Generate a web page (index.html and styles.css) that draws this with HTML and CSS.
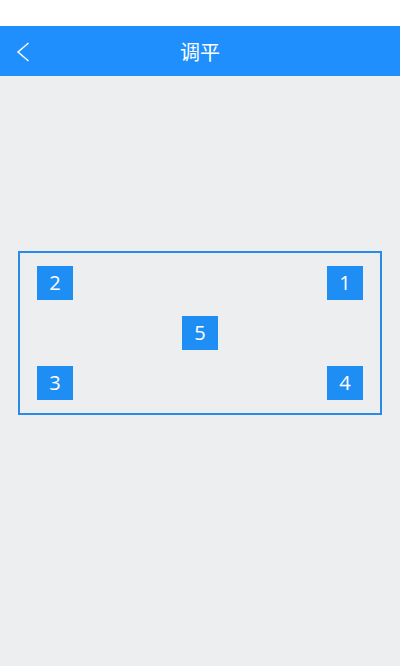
FILE: index.html
```html
<!DOCTYPE html>
<html lang="zh">
<head>
<meta charset="utf-8">
<link rel="stylesheet" href="styles.css">
</head>
<body>
<div class="status"></div>
<header class="bar">
  <svg class="back" width="14" height="20" viewBox="0 0 14 20"><path d="M12.5 1 L2 10 L12.5 19" fill="none" stroke="#fff" stroke-width="1.5"/></svg>
  <div class="title">调平</div>
</header>
<main class="page">
  <div class="box">
    <div class="row"><div class="sq">2</div><div class="sq">1</div></div>
    <div class="row center"><div class="sq">5</div></div>
    <div class="row"><div class="sq">3</div><div class="sq">4</div></div>
  </div>
</main>
</body>
</html>
```
FILE: styles.css
```css
html, body { margin: 0; padding: 0; }
body { width: 400px; height: 666px; background: #edeef0; font-family: "Open Sans", "Noto Sans CJK SC", sans-serif; overflow: hidden; }
.status { height: 26px; background: #ffffff; }
.bar { height: 50px; background: #1f8ffe; display: flex; align-items: center; justify-content: center; position: relative; }
.back { position: absolute; left: 16px; top: 16px; }
.title { color: #fff; font-size: 20px; font-family: "Noto Sans CJK SC", sans-serif; }
.page { background: #edeef0; height: 590px; padding-top: 175px; box-sizing: border-box; }
.box { margin-left: 18px; width: 364px; height: 164px; box-sizing: border-box; border: 2px solid #2a8ae8; padding: 13px 17px; display: flex; flex-direction: column; gap: 16px; }
.row { display: flex; justify-content: space-between; height: 34px; }
.row.center { justify-content: center; }
.sq { width: 36px; height: 34px; background: #1f8ef4; color: #fff; font-size: 20px; font-weight: 400; display: flex; align-items: center; justify-content: center; line-height: 1; }
```
